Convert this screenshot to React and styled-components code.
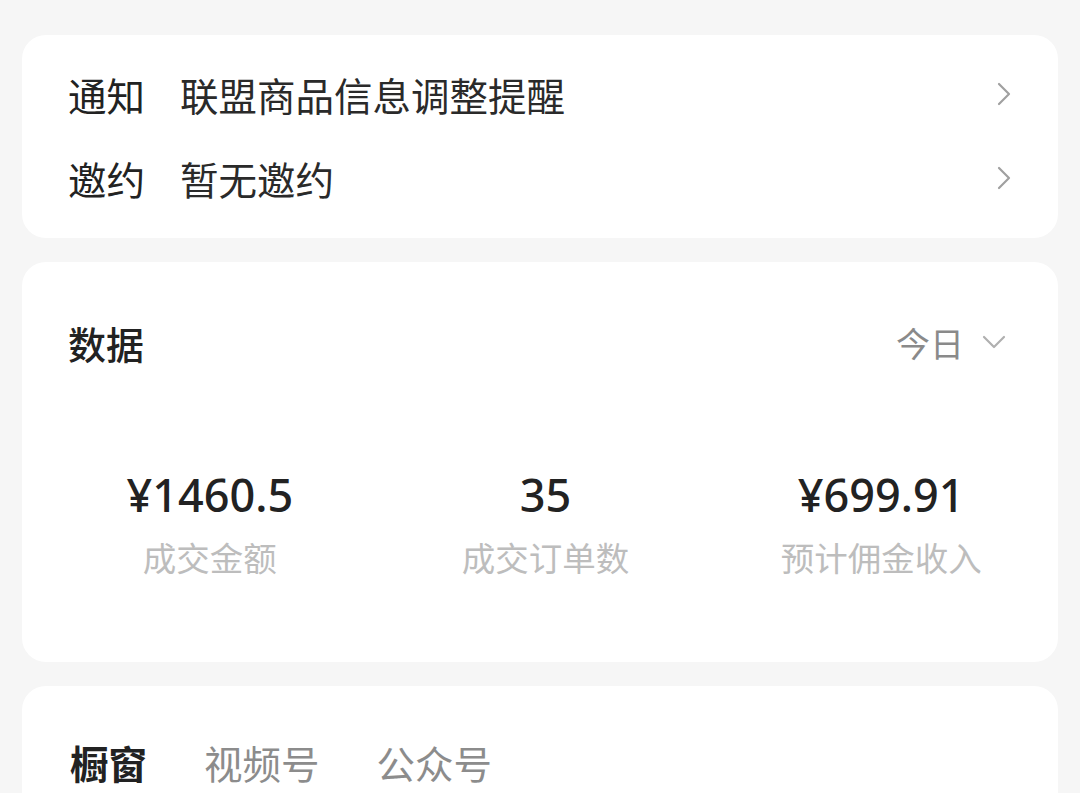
import styled, { createGlobalStyle } from "styled-components";

const GlobalStyle = createGlobalStyle`
  html, body {
    margin: 0;
    padding: 0;
    background: #f6f6f6;
    font-family: "Noto Sans CJK SC", "Noto Sans", sans-serif;
  }
`;

const Page = styled.div`
  display: flex;
  flex-direction: column;
  gap: 24px;
  padding: 35px 22px 0;
  height: 793px;
  box-sizing: border-box;
  overflow: hidden;
`;

const Card = styled.div`
  background: #fff;
  border-radius: 24px;
  flex-shrink: 0;
`;

const NoticeCard = styled(Card)`
  padding: 17px 46px 18px 46px;
`;

const NoticeRow = styled.div`
  display: flex;
  align-items: center;
  height: 84px;
`;

const Label = styled.div`
  width: 112px;
  font-size: 38.5px;
  color: #222;
`;

const Value = styled.div`
  flex: 1;
  font-size: 38.5px;
  color: #2a2a2a;
`;

const Chevron = styled.svg`
  width: 16px;
  height: 26px;
`;

const DataCard = styled(Card)`
  height: 400px;
  box-sizing: border-box;
  padding-top: 54px;
`;

const DataHeader = styled.div`
  display: flex;
  align-items: center;
  justify-content: space-between;
  height: 52px;
  padding: 0 52px 0 46px;
`;

const Title = styled.div`
  font-size: 38px;
  font-weight: 500;
  color: #222;
`;

const Range = styled.div`
  display: flex;
  align-items: center;
  gap: 18px;
  font-size: 34px;
  color: #8a8a8a;
`;

const Stats = styled.div`
  display: grid;
  grid-template-columns: repeat(3, 1fr);
  padding: 0 9px 0 20px;
  margin-top: 99px;
`;

const Stat = styled.div`
  display: flex;
  flex-direction: column;
  align-items: center;
  gap: 6px;
`;

const Num = styled.div`
  font-family: "Noto Sans", Roboto, sans-serif;
  font-size: 45px;
  font-weight: 500;
  color: #222;
  line-height: 56px;
`;

const StatLabel = styled.div`
  font-size: 33.5px;
  color: #bdbdbd;
  line-height: 56px;
`;

const ChannelCard = styled(Card)`
  height: 200px;
  padding: 50px 46px 0 48px;
  box-sizing: border-box;
`;

const Tabs = styled.div`
  display: flex;
  gap: 57px;
  height: 52px;
  align-items: center;
`;

const Tab = styled.div`
  font-size: 38.5px;
  font-weight: ${(p) => (p.$active ? 600 : 400)};
  color: ${(p) => (p.$active ? "#222" : "#8c8c8c")};
`;

function RightArrow() {
  return (
    <Chevron viewBox="0 0 16 26" fill="none">
      <path d="M3 3l10 10-10 10" stroke="#a0a0a0" strokeWidth="2.2" strokeLinecap="round" strokeLinejoin="round" />
    </Chevron>
  );
}

const stats = [
  { value: "¥1460.5", label: "成交金额" },
  { value: "35", label: "成交订单数" },
  { value: "¥699.91", label: "预计佣金收入" },
];

export default function App() {
  return (
    <>
      <GlobalStyle />
      <Page>
        <NoticeCard>
          <NoticeRow>
            <Label>通知</Label>
            <Value>联盟商品信息调整提醒</Value>
            <RightArrow />
          </NoticeRow>
          <NoticeRow>
            <Label>邀约</Label>
            <Value>暂无邀约</Value>
            <RightArrow />
          </NoticeRow>
        </NoticeCard>

        <DataCard>
          <DataHeader>
            <Title>数据</Title>
            <Range>
              今日
              <svg width="24" height="14" viewBox="0 0 24 14" fill="none">
                <path d="M2 2l10 10 10-10" stroke="#b0b0b0" strokeWidth="2.2" strokeLinecap="round" strokeLinejoin="round" />
              </svg>
            </Range>
          </DataHeader>
          <Stats>
            {stats.map((s) => (
              <Stat key={s.label}>
                <Num>{s.value}</Num>
                <StatLabel>{s.label}</StatLabel>
              </Stat>
            ))}
          </Stats>
        </DataCard>

        <ChannelCard>
          <Tabs>
            <Tab $active>橱窗</Tab>
            <Tab>视频号</Tab>
            <Tab>公众号</Tab>
          </Tabs>
        </ChannelCard>
      </Page>
    </>
  );
}
